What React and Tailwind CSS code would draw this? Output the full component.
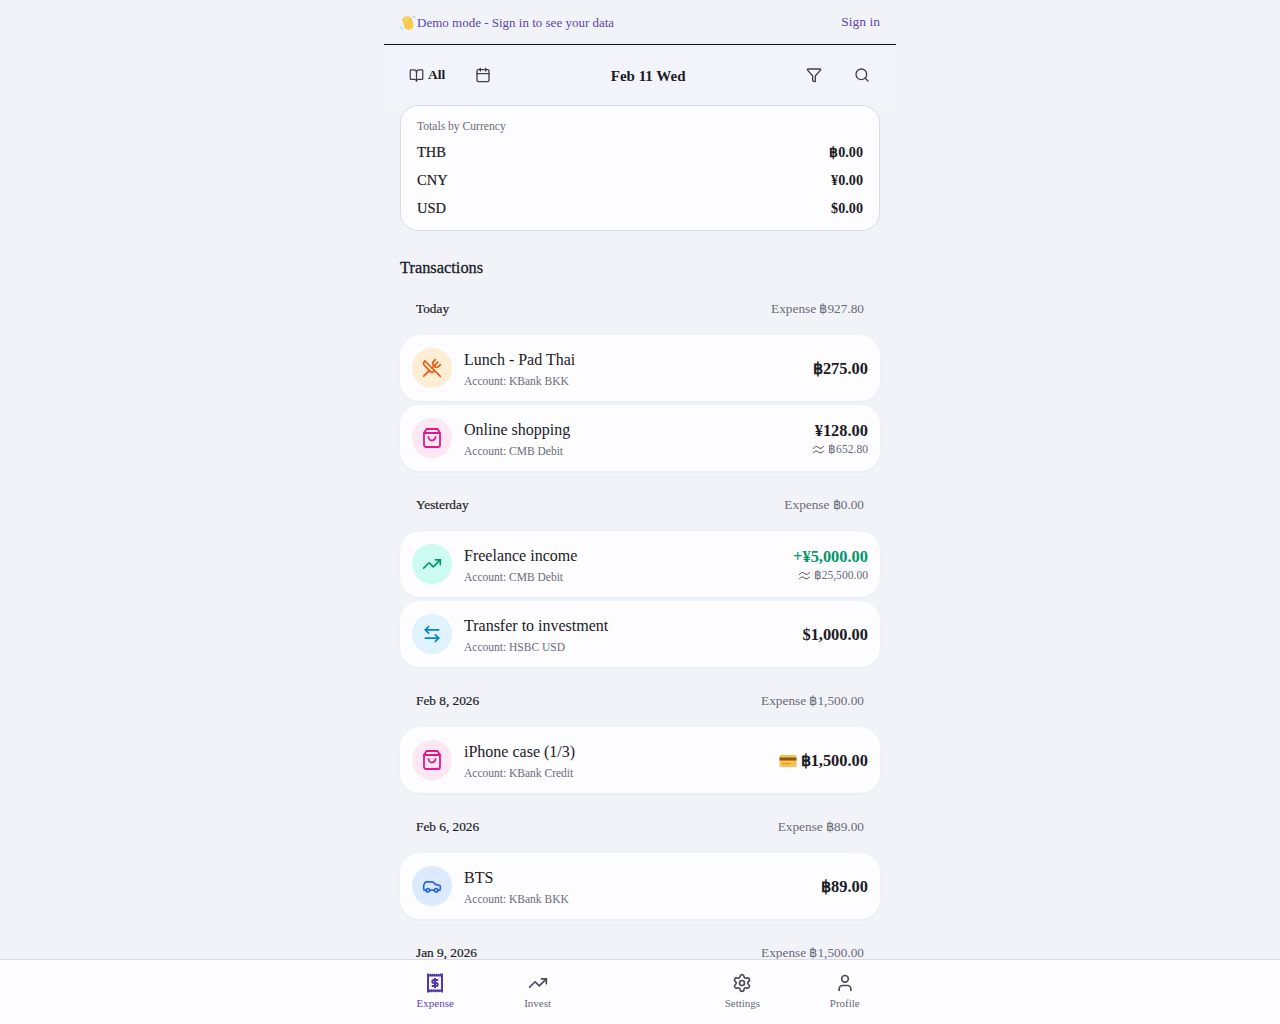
import React from 'react';
import { BookOpen, Calendar, Funnel, Search, UtensilsCrossed, TrendingUp, ArrowLeftRight, Car, Settings, User } from 'lucide-react';

function BagIcon() {
    return (
        <svg width="24" height="24" viewBox="0 0 24 24" fill="none" stroke="#e0188c" strokeWidth="1.8" strokeLinecap="round" strokeLinejoin="round">
            <path d="M6.5 3h11L20 7v12a2 2 0 0 1-2 2H6a2 2 0 0 1-2-2V7z" />
            <path d="M4 7h16" />
            <path d="M8.5 11a3.5 3.5 0 0 0 7 0" />
        </svg>
    );
}

function ApproxIcon() {
    return (
        <svg width="13" height="12" viewBox="0 0 24 24" fill="none" stroke="#33333d" strokeWidth="1.8" strokeLinecap="round">
            <path d="M2 9c3-5 6-5 10-2s7 2 10-2" />
            <path d="M2 18c3-5 6-5 10-2s7 2 10-2" />
        </svg>
    );
}

function WaveEmoji() {
    return (
        <svg width="16" height="16" viewBox="0 0 16 16" className="shrink-0">
            <g stroke="#fbc94a" strokeWidth="2.4" strokeLinecap="round">
                <path d="M5 8 L3 4.5" />
                <path d="M7 6.5 L5 2.5" />
                <path d="M9.5 6 L7.8 2" />
                <path d="M11.5 6.5 L10.4 3.4" />
            </g>
            <path d="M3.5 7.5 L12 5.5 L13.5 10 Q13.5 14.5 8.5 14.8 Q5.5 14.8 4 11.5 Z" fill="#fbc94a" />
            <path d="M0.8 11.5 Q1 13.5 2.8 14.8 M12.5 0.8 Q14.5 1 15.2 3" stroke="#7cc8f0" strokeWidth="1" fill="none" />
        </svg>
    );
}

function CardEmoji() {
    return (
        <svg width="18" height="14" viewBox="0 0 18 14" className="shrink-0">
            <rect x="0.5" y="1" width="17" height="12" rx="1.5" fill="#fbc04d" />
            <rect x="0.5" y="3.5" width="17" height="3" fill="#8a5a14" />
            <rect x="3" y="9" width="9" height="1.2" fill="#d99a2b" />
        </svg>
    );
}

function ReceiptIcon() {
    return (
        <svg width="20" height="20" viewBox="0 0 20 20">
            <path d="M2 0.5h1.5l1 1 1-1 1 1 1-1 1 1 1-1 1 1 1-1 1 1 1-1 1 1 1-1H18v19h-1.5l-1-1-1 1-1-1-1 1-1-1-1 1-1-1-1 1-1-1-1 1-1-1-1 1H2z" fill="#4f39a8" />
            <rect x="4" y="3.5" width="12" height="13" fill="#f5f3ff" />
            <path d="M13.2 7H8.8a1.5 1.5 0 0 0 0 3h2.4a1.5 1.5 0 0 1 0 3H6.8M10 5v10" fill="none" stroke="#4f39a8" strokeWidth="2" />
        </svg>
    );
}

const CURRENCIES = [
    { code: 'THB', value: '฿0.00' },
    { code: 'CNY', value: '¥0.00' },
    { code: 'USD', value: '$0.00' },
];

const GROUPS = [
    {
        label: 'Today',
        expense: 'Expense ฿927.80',
        rows: [
            { title: 'Lunch - Pad Thai', account: 'Account: KBank BKK', amount: '฿275.00', bg: 'bg-[#ffedd5]', icon: <UtensilsCrossed size={20} color="#ea580c" /> },
            { title: 'Online shopping', account: 'Account: CMB Debit', amount: '¥128.00', approx: '฿652.80', bg: 'bg-[#fce7f3]', icon: <BagIcon /> },
        ],
    },
    {
        label: 'Yesterday',
        expense: 'Expense ฿0.00',
        rows: [
            { title: 'Freelance income', account: 'Account: CMB Debit', amount: '+¥5,000.00', approx: '฿25,500.00', income: true, bg: 'bg-[#ccfbf1]', icon: <TrendingUp size={20} color="#059669" /> },
            { title: 'Transfer to investment', account: 'Account: HSBC USD', amount: '$1,000.00', bg: 'bg-[#e0f2fe]', icon: <ArrowLeftRight size={20} color="#0284c7" /> },
        ],
    },
    {
        label: 'Feb 8, 2026',
        expense: 'Expense ฿1,500.00',
        rows: [
            { title: 'iPhone case (1/3)', account: 'Account: KBank Credit', amount: '฿1,500.00', card: true, bg: 'bg-[#fce7f3]', icon: <BagIcon /> },
        ],
    },
    {
        label: 'Feb 6, 2026',
        expense: 'Expense ฿89.00',
        rows: [
            { title: 'BTS', account: 'Account: KBank BKK', amount: '฿89.00', bg: 'bg-[#dbeafe]', icon: <Car size={20} color="#2563eb" /> },
        ],
    },
    {
        label: 'Jan 9, 2026',
        expense: 'Expense ฿1,500.00',
        rows: [],
    },
];

function Row({ row }) {
    return (
        <div className="flex h-[66px] items-center gap-3 rounded-[20px] bg-[#fdfcff] px-3 shadow-[0_1px_3px_rgba(120,120,160,0.06)]">
            <div className={`flex h-10 w-10 shrink-0 items-center justify-center rounded-full ${row.bg}`}>
                {row.icon}
            </div>
            <div className="min-w-0 flex-1 pt-0.5">
                <div className="text-[16px] leading-6 text-[#1b1b25]">{row.title}</div>
                <div className="text-[11.5px] leading-[18px] text-[#6b6b78]">{row.account}</div>
            </div>
            <div className={`text-right ${row.approx ? '' : 'pt-0.5'}`}>
                <div className={`flex items-center justify-end gap-1 text-[16.4px] leading-6 font-semibold ${row.income ? 'text-[#059669]' : 'text-[#1b1b25]'}`}>
                    {row.card && <CardEmoji />}
                    {row.amount}
                </div>
                {row.approx && (
                    <div className="flex items-center justify-end gap-[3px] text-[11.6px] leading-[14px] text-[#6b6b78]">
                        <ApproxIcon />
                        {row.approx}
                    </div>
                )}
            </div>
        </div>
    );
}

function NavItem({ icon, label, active }) {
    return (
        <div className={`flex flex-col items-center gap-0.5 text-[11px] leading-4 ${active ? 'text-[#5b45b0]' : 'text-[#6b6b78]'}`}>
            {icon}
            <span>{label}</span>
        </div>
    );
}

export default function App() {
    return (
        <div className="flex h-screen flex-col overflow-hidden bg-[#f1f3f9] font-['Liberation_Serif','Noto_Sans',serif]">
            <div className="min-h-0 flex-1 overflow-hidden">
                <div className="mx-auto h-full w-[512px]">
                    <div className="flex h-[45px] items-center justify-between border-b border-[#111118] px-4 pt-px text-[#5b45b0]">
                        <div className="flex items-center gap-px text-[13px]">
                            <WaveEmoji />
                            <span>Demo mode - Sign in to see your data</span>
                        </div>
                        <span className="text-[13.5px]">Sign in</span>
                    </div>

                    <div className="flex h-[60px] items-center bg-[#f3f4fb] pr-[26px] pl-[25px] text-[#3f3f4a]">
                        <div className="flex items-center gap-1">
                            <BookOpen size={15} />
                            <span className="text-[13.5px] font-semibold text-[#1b1b25]">All</span>
                        </div>
                        <Calendar size={16} className="ml-[30px]" />
                        <div className="flex-1 pt-0.5 pr-px text-center text-[15px] font-semibold text-[#1b1b25]">Feb 11 Wed</div>
                        <Funnel size={16} />
                        <Search size={16} className="ml-8" />
                    </div>

                    <div className="px-4">
                        <div className="rounded-[18px] border border-[#d9dae3] bg-[#fdfcff] px-4 pt-[13px] pb-[7px]">
                            <div className="mb-1 text-[11.6px] leading-4 text-[#6b6b78]">Totals by Currency</div>
                            {CURRENCIES.map((c) => (
                                <div key={c.code} className="flex h-7 items-center justify-between text-[14.5px] text-[#1b1b25]">
                                    <span className="[-webkit-text-stroke:0.2px_#1b1b25]">{c.code}</span>
                                    <span className="text-[14.2px] font-semibold">{c.value}</span>
                                </div>
                            ))}
                        </div>

                        <h2 className="mt-[25px] text-[16.4px] leading-6 text-[#1b1b25] [-webkit-text-stroke:0.3px_#1b1b25]">Transactions</h2>

                        <div className="mt-[11px] flex flex-col gap-4">
                            {GROUPS.map((group) => (
                                <div key={group.label}>
                                    <div className="flex h-9 items-center justify-between px-4 text-[13.3px]">
                                        <span className="text-[#1b1b25] [-webkit-text-stroke:0.2px_#1b1b25]">{group.label}</span>
                                        <span className="text-[#6b6b78]">{group.expense}</span>
                                    </div>
                                    {group.rows.length > 0 && (
                                        <div className="mt-2 flex flex-col gap-1">
                                            {group.rows.map((row) => (
                                                <Row key={row.title} row={row} />
                                            ))}
                                        </div>
                                    )}
                                </div>
                            ))}
                        </div>
                    </div>
                </div>
            </div>

            <div className="h-[65px] shrink-0 border-t border-[#d9dae3] bg-[#fdfcff]">
                <div className="mx-auto grid w-[512px] grid-cols-5 pt-[13px]">
                    <NavItem active label="Expense" icon={<ReceiptIcon />} />
                    <NavItem label="Invest" icon={<TrendingUp size={20} color="#4b4b57" />} />
                    <div />
                    <NavItem label="Settings" icon={<Settings size={20} color="#4b4b57" />} />
                    <NavItem label="Profile" icon={<User size={20} color="#4b4b57" />} />
                </div>
            </div>
        </div>
    );
}
